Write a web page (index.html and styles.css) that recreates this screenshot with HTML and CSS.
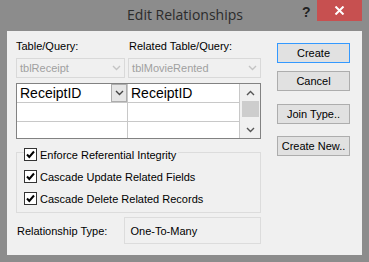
FILE: index.html
```html
<!DOCTYPE html>
<html lang="en">
<head>
  <meta charset="UTF-8">
  <title>Edit Relationships</title>
  <link rel="stylesheet" href="styles.css">
</head>
<body>
  <div class="window">
    <!-- Title bar -->
    <div class="titlebar">
      <span class="title">Edit Relationships</span>
      <span class="help">?</span>
      <span class="close">
        <svg width="11" height="9" viewBox="0 0 11 9"><path d="M1.5 0.5 L9.5 8.5 M9.5 0.5 L1.5 8.5" stroke="#fff" stroke-width="2"/></svg>
      </span>
    </div>

    <div class="client">
      <div class="left">
        <div class="labels">
          <span class="label col-a">Table/Query:</span>
          <span class="label">Related Table/Query:</span>
        </div>

        <div class="combos">
          <div class="combo col-a">tblReceipt<span class="chev">
            <svg width="9" height="6" viewBox="0 0 9 6"><path d="M1 1 L4.5 4.5 L8 1" stroke="#c4c4c4" stroke-width="1.4" fill="none"/></svg>
          </span></div>
          <div class="combo col-b">tblMovieRented<span class="chev">
            <svg width="9" height="6" viewBox="0 0 9 6"><path d="M1 1 L4.5 4.5 L8 1" stroke="#c4c4c4" stroke-width="1.4" fill="none"/></svg>
          </span></div>
        </div>

        <!-- Field grid -->
        <div class="grid">
          <div class="cells">
            <div class="row">
              <div class="cell first">ReceiptID<span class="drop">
                <svg width="9" height="6" viewBox="0 0 9 6"><path d="M1 1 L4.5 4.5 L8 1" stroke="#444" stroke-width="1.4" fill="none"/></svg>
              </span></div>
              <div class="cell">ReceiptID</div>
            </div>
            <div class="row"><div class="cell first"></div><div class="cell"></div></div>
            <div class="row last"><div class="cell first"></div><div class="cell"></div></div>
          </div>
          <div class="scrollbar">
            <span class="arrow">
              <svg width="9" height="6" viewBox="0 0 9 6"><path d="M1 5 L4.5 1.5 L8 5" stroke="#555" stroke-width="1.4" fill="none"/></svg>
            </span>
            <span class="thumb"></span>
            <span class="track"></span>
            <span class="arrow">
              <svg width="9" height="6" viewBox="0 0 9 6"><path d="M1 1 L4.5 4.5 L8 1" stroke="#555" stroke-width="1.4" fill="none"/></svg>
            </span>
          </div>
        </div>

        <!-- Integrity options -->
        <div class="group">
          <label class="check legend"><span class="box"><svg width="11" height="11" viewBox="0 0 11 11"><path d="M2 5.5 L4.3 8 L9 2.5" stroke="#000" stroke-width="2" fill="none"/></svg></span>Enforce Referential Integrity</label>
          <label class="check"><span class="box"><svg width="11" height="11" viewBox="0 0 11 11"><path d="M2 5.5 L4.3 8 L9 2.5" stroke="#000" stroke-width="2" fill="none"/></svg></span>Cascade Update Related Fields</label>
          <label class="check"><span class="box"><svg width="11" height="11" viewBox="0 0 11 11"><path d="M2 5.5 L4.3 8 L9 2.5" stroke="#000" stroke-width="2" fill="none"/></svg></span>Cascade Delete Related Records</label>
        </div>

        <div class="reltype">
          <span class="label">Relationship Type:</span>
          <div class="relbox">One-To-Many</div>
        </div>
      </div>

      <div class="buttons">
        <button class="default">Create</button>
        <button>Cancel</button>
        <button class="spaced">Join Type..</button>
        <button class="spaced">Create New..</button>
      </div>
    </div>
  </div>
</body>
</html>
```

FILE: styles.css
```css
body {
  margin: 0;
  background-color: #8c8c8c;
  font-family: "Liberation Sans", Arial, sans-serif;
}

.window {
  width: 369px;
  height: 262px;
  background-color: #8c8c8c;
}

.titlebar {
  height: 31px;
  position: relative;
  display: flex;
  justify-content: center;
}

.title {
  font-family: "Open Sans", sans-serif;
  font-size: 14px;
  color: #2b2b2b;
  margin-top: 5px;
  margin-left: 1px;
}

.help {
  position: absolute;
  left: 302px;
  top: 4px;
  font-weight: bold;
  font-size: 14px;
  color: #222;
}

.close {
  position: absolute;
  left: 317px;
  top: 0;
  width: 45px;
  height: 21px;
  background-color: #c75050;
  display: flex;
  align-items: center;
  justify-content: center;
}

.client {
  margin: 0 7px;
  height: 224px;
  background-color: #f0f0f0;
  display: flex;
  font-size: 11px;
  color: #000;
}

.left {
  margin-left: 9px;
  width: 245px;
  display: flex;
  flex-direction: column;
}

.labels {
  display: flex;
  height: 27px;
  align-items: center;
  padding-top: 3px;
  box-sizing: border-box;
}

.col-a {
  width: 113px;
}

.combos {
  display: flex;
  height: 20px;
}

.combo {
  box-sizing: border-box;
  height: 20px;
  border: 1px solid #d9d9d9;
  color: #a0a0a0;
  font-size: 11px;
  padding: 3px 3px;
  position: relative;
  margin-right: 3px;
}

.combo.col-a {
  width: 110px;
}

.combo.col-b {
  width: 134px;
  margin-right: 0;
}

.chev {
  position: absolute;
  right: 3px;
  top: 6px;
  display: flex;
}

.grid {
  margin-top: 5px;
  height: 56px;
  box-sizing: border-box;
  border: 1px solid #828282;
  background-color: #fff;
  display: flex;
}

.cells {
  width: 223px;
}

.row {
  display: flex;
  height: 19px;
  border-bottom: 1px solid #c8c8c8;
  box-sizing: border-box;
}

.row.last {
  border-bottom: none;
  height: 16px;
}

.cell {
  width: 111px;
  font-size: 14px;
  padding: 1px 3px;
  box-sizing: border-box;
  position: relative;
}

.cell.first {
  border-right: 1px solid #c8c8c8;
}

.drop {
  position: absolute;
  right: 0;
  top: 0;
  width: 16px;
  height: 18px;
  box-sizing: border-box;
  border: 1px solid #adadad;
  background-color: #e6e6e6;
  display: flex;
  align-items: center;
  justify-content: center;
}

.scrollbar {
  width: 20px;
  border-left: 1px solid #c8c8c8;
  background-color: #f0f0f0;
  display: flex;
  flex-direction: column;
  align-items: center;
}

.arrow {
  height: 17px;
  display: flex;
  align-items: center;
  justify-content: center;
}

.thumb {
  width: 17px;
  height: 16px;
  background-color: #cdcdcd;
}

.track {
  flex: 1;
}

.group {
  margin-top: 13px;
  height: 61px;
  box-sizing: border-box;
  border: 1px solid #dcdcdc;
  display: flex;
  flex-direction: column;
  padding-left: 7px;
}

.check {
  display: flex;
  align-items: center;
  height: 13px;
  margin-top: 9px;
  font-size: 11px;
}

.check.legend {
  margin-top: -5px;
  background-color: #f0f0f0;
  align-self: flex-start;
  padding-right: 2px;
}

.box {
  width: 13px;
  height: 13px;
  box-sizing: border-box;
  border: 1px solid #333;
  background-color: #fff;
  display: flex;
  margin-right: 3px;
}

.reltype {
  margin-top: 4px;
  display: flex;
  align-items: center;
  height: 27px;
}

.reltype .label {
  width: 107px;
  padding-left: 1px;
}

.relbox {
  box-sizing: border-box;
  width: 138px;
  height: 27px;
  border: 1px solid #dcdcdc;
  padding: 7px 6px;
}

.buttons {
  margin-left: 16px;
  padding-top: 12px;
  display: flex;
  flex-direction: column;
  gap: 8px;
}

button {
  width: 73px;
  height: 20px;
  background-color: #e1e1e1;
  border: 1px solid #adadad;
  font-family: "Liberation Sans", Arial, sans-serif;
  font-size: 11px;
  color: #000;
  padding: 0;
}

button.default {
  border-color: #3399ff;
}

button.spaced {
  margin-top: 5px;
}

button.spaced + button.spaced {
  margin-top: 4px;
}
```
